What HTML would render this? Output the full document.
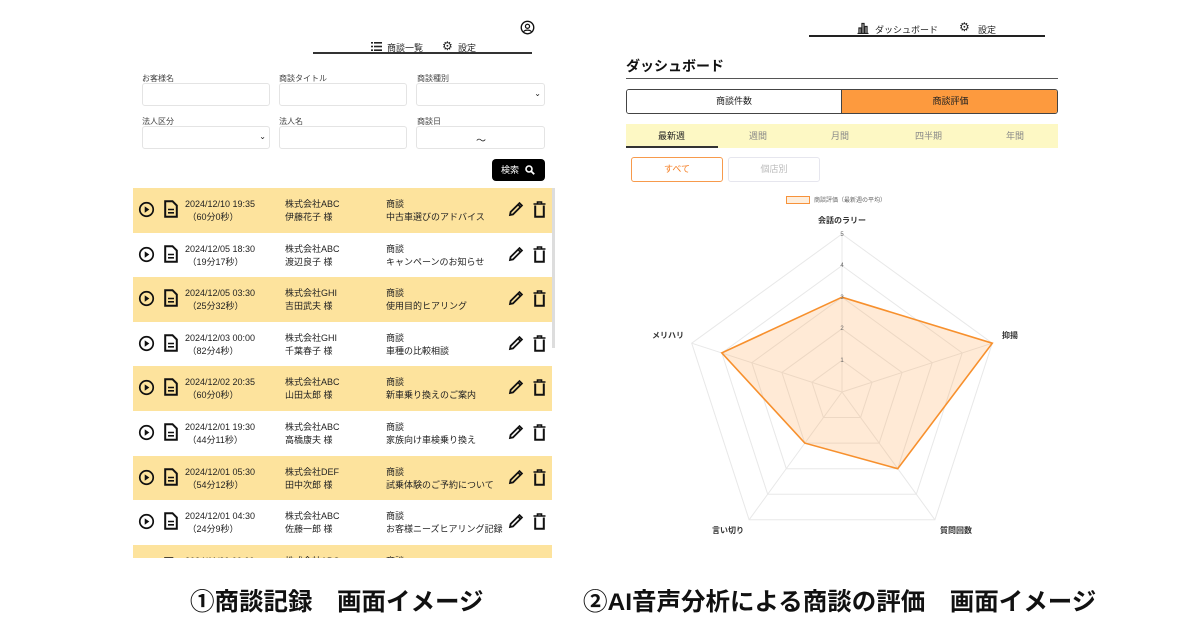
<!DOCTYPE html>
<html><head><meta charset="utf-8"><style>
*{margin:0;padding:0;box-sizing:border-box}
body{width:1200px;height:630px;background:#fff;position:relative;overflow:hidden;font-family:"Liberation Sans","Noto Sans CJK JP",sans-serif;color:#222}
.a{position:absolute}
.lbl{font-size:8px;color:#444}
.inp{position:absolute;height:23px;border:1px solid #e4e4e4;border-radius:3px;background:#fff}
.row{position:absolute;left:0;width:419px;height:44.6px;font-size:9px;line-height:13px}
.row.y{background:#fde39d}
.row .t{position:absolute;top:10px}
.nav{font-size:9px;color:#222}
.cap{font-size:24.5px;font-weight:bold;color:#111;white-space:nowrap}
</style></head><body>
<!-- Left panel -->
<svg class="a" style="left:520px;top:20px" width="15" height="15" viewBox="0 0 24 24"><circle cx="12" cy="12" r="10" fill="none" stroke="#111" stroke-width="2.2"/><circle cx="12" cy="10" r="3.3" fill="none" stroke="#111" stroke-width="2"/><path d="M6 18.5c2-3 10-3 12 0" fill="none" stroke="#111" stroke-width="2"/></svg>
<svg class="a" style="left:371px;top:42px" width="11" height="9" viewBox="0 0 11 9"><g fill="#222"><rect x="0" y="0" width="2" height="1.6"/><rect x="3" y="0" width="8" height="1.6"/><rect x="0" y="3.7" width="2" height="1.6"/><rect x="3" y="3.7" width="8" height="1.6"/><rect x="0" y="7.4" width="2" height="1.6"/><rect x="3" y="7.4" width="8" height="1.6"/></g></svg>
<div class="a nav" style="left:387px;top:41px">商談一覧</div>
<div class="a nav" style="left:442px;top:39px;font-size:12px">⚙</div>
<div class="a nav" style="left:458px;top:41px">設定</div>
<div class="a" style="left:313px;top:52px;width:219px;height:2px;background:#333"></div>

<div class="a lbl" style="left:142px;top:73px">お客様名</div>
<div class="a lbl" style="left:279px;top:73px">商談タイトル</div>
<div class="a lbl" style="left:417px;top:73px">商談種別</div>
<div class="inp" style="left:142px;top:83px;width:128px"></div>
<div class="inp" style="left:279px;top:83px;width:128px"></div>
<div class="inp" style="left:416px;top:83px;width:129px"><span class="a" style="right:3px;top:5px;font-size:8px">⌄</span></div>
<div class="a lbl" style="left:142px;top:116px">法人区分</div>
<div class="a lbl" style="left:279px;top:116px">法人名</div>
<div class="a lbl" style="left:417px;top:116px">商談日</div>
<div class="inp" style="left:142px;top:126px;width:128px"><span class="a" style="right:3px;top:5px;font-size:8px">⌄</span></div>
<div class="inp" style="left:279px;top:126px;width:128px"></div>
<div class="inp" style="left:416px;top:126px;width:129px"><span class="a" style="left:59px;top:5px;font-size:10px">～</span></div>
<div class="a" style="left:492px;top:159px;width:53px;height:22px;background:#000;border-radius:4px;color:#fff;font-size:9px;line-height:22px;padding-left:9px">検索 <svg style="vertical-align:-2px;margin-left:3px" width="10" height="10" viewBox="0 0 10 10"><circle cx="4" cy="4" r="3" fill="none" stroke="#fff" stroke-width="1.6"/><path d="M6.2 6.2L9.2 9.2" stroke="#fff" stroke-width="1.8"/></svg></div>

<div class="a" style="left:552px;top:188px;width:3px;height:160px;background:#ddd"></div>

<div id="rows" class="a" style="left:133px;top:188px;width:419px;height:370px;overflow:hidden"></div>

<div class="a cap" style="left:190px;top:583px">①商談記録　画面イメージ</div>

<!-- Right panel -->
<svg class="a" style="left:857px;top:22px" width="12" height="12" viewBox="0 0 12 12"><path d="M0.5 11.5H11.5M2 11V6H4V11M5 11V1.5H7V11M8 11V4.5H10V11" fill="none" stroke="#222" stroke-width="1.3"/></svg>
<div class="a nav" style="left:875px;top:23px">ダッシュボード</div>
<div class="a nav" style="left:959px;top:20px;font-size:12px">⚙</div>
<div class="a nav" style="left:978px;top:23px">設定</div>
<div class="a" style="left:809px;top:35px;width:236px;height:2px;background:#222"></div>

<div class="a" style="left:626px;top:56px;font-size:14px;font-weight:bold;color:#111">ダッシュボード</div>
<div class="a" style="left:626px;top:78px;width:432px;height:1px;background:#555"></div>
<div class="a" style="left:626px;top:89px;width:432px;height:25px;border:1px solid #444;border-radius:3px;overflow:hidden">
<div class="a" style="left:0;top:0;width:215px;height:23px;background:#fff;border-right:1px solid #444;font-size:9px;text-align:center;line-height:23px">商談件数</div>
<div class="a" style="left:215px;top:0;width:217px;height:23px;background:#fd9a3e;font-size:9px;text-align:center;line-height:23px">商談評価</div>
</div>
<div class="a" style="left:626px;top:124px;width:432px;height:24px;background:#fdf8c4;font-size:9px;color:#888;line-height:24px">
<span class="a" style="left:32px;color:#222">最新週</span><span class="a" style="left:123px">週間</span><span class="a" style="left:205px">月間</span><span class="a" style="left:289px">四半期</span><span class="a" style="left:380px">年間</span>
<div class="a" style="left:0;top:22px;width:92px;height:2px;background:#333"></div></div>
<div class="a" style="left:631px;top:157px;width:92px;height:25px;border:1px solid #f79a4c;border-radius:3px;color:#f57c1f;font-size:9px;text-align:center;line-height:23px">すべて</div>
<div class="a" style="left:728px;top:157px;width:92px;height:25px;border:1px solid #e6e6ee;border-radius:3px;color:#bbb;font-size:9px;text-align:center;line-height:23px">個店別</div>
<div class="a" style="left:786px;top:196px;width:24px;height:8px;border:1.5px solid #f7923a;background:#fdeedd"></div>
<div class="a" style="left:814px;top:195px;font-size:6px;color:#666">商談評価（最新週の平均）</div>

<svg class="a" style="left:0;top:0" width="1200" height="630">
<g transform="translate(842 392)" fill="none" stroke="#e8e8e8" stroke-width="1">
<polygon points="0,-31.6 30.05,-9.76 18.58,25.56 -18.58,25.56 -30.05,-9.76"/>
<polygon points="0,-63.2 60.1,-19.5 37.2,51.1 -37.2,51.1 -60.1,-19.5"/>
<polygon points="0,-94.8 90.2,-29.3 55.7,76.7 -55.7,76.7 -90.2,-29.3"/>
<polygon points="0,-126.4 120.2,-39.1 74.3,102.3 -74.3,102.3 -120.2,-39.1"/>
<polygon points="0,-158 150.3,-48.8 92.9,127.8 -92.9,127.8 -150.3,-48.8"/>
<path d="M0 0L0 -158M0 0L150.3 -48.8M0 0L92.9 127.8M0 0L-92.9 127.8M0 0L-150.3 -48.8"/>
</g>
<polygon points="842,297.2 992.3,343.2 897.7,468.7 804.8,443.1 721.8,352.9" fill="rgba(253,160,70,0.22)" stroke="#f7902d" stroke-width="1.6"/>
<g font-size="6" fill="#666" text-anchor="middle" font-family="Liberation Sans,sans-serif">
<text x="842" y="236">5</text><text x="842" y="267">4</text><text x="842" y="299">3</text><text x="842" y="330">2</text><text x="842" y="362">1</text></g>
<g font-size="8" fill="#333" font-family="Liberation Sans,Noto Sans CJK JP,sans-serif" text-anchor="middle" font-weight="bold">
<text x="842" y="223">会話のラリー</text><text x="1010" y="338">抑揚</text><text x="668" y="338">メリハリ</text><text x="956" y="533">質問回数</text><text x="728" y="533">言い切り</text></g>
</svg>

<div class="a cap" style="left:583px;top:583px">②AI音声分析による商談の評価　画面イメージ</div>

<script>
var d=[["2024/12/10 19:35","（60分0秒）","株式会社ABC","伊藤花子 様","中古車選びのアドバイス"],
["2024/12/05 18:30","（19分17秒）","株式会社ABC","渡辺良子 様","キャンペーンのお知らせ"],
["2024/12/05 03:30","（25分32秒）","株式会社GHI","吉田武夫 様","使用目的ヒアリング"],
["2024/12/03 00:00","（82分4秒）","株式会社GHI","千葉春子 様","車種の比較相談"],
["2024/12/02 20:35","（60分0秒）","株式会社ABC","山田太郎 様","新車乗り換えのご案内"],
["2024/12/01 19:30","（44分11秒）","株式会社ABC","高橋康夫 様","家族向け車検乗り換え"],
["2024/12/01 05:30","（54分12秒）","株式会社DEF","田中次郎 様","試乗体験のご予約について"],
["2024/12/01 04:30","（24分9秒）","株式会社ABC","佐藤一郎 様","お客様ニーズヒアリング記録"],
["2024/11/30 00:00","（30分0秒）","株式会社ABC","鈴木 様","商談"]];
var icons='<svg class="a" style="left:5px;top:13px" width="17" height="17" viewBox="0 0 24 24"><circle cx="12" cy="12" r="9.5" fill="none" stroke="#111" stroke-width="2.4"/><path d="M9.5 7.5L16 12L9.5 16.5Z" fill="#111"/></svg>'+
'<svg class="a" style="left:31px;top:12px" width="14" height="18" viewBox="0 0 14 18"><path d="M1.2 1.2H8.5L12.8 5.5V16.8H1.2Z" fill="none" stroke="#111" stroke-width="2"/><path d="M4 9.5H10M4 12.8H10" stroke="#111" stroke-width="1.6"/></svg>'+
'<svg class="a" style="left:375px;top:13px" width="16" height="16" viewBox="0 0 16 16"><path d="M2 14L2.6 11L11.5 2.1L13.9 4.5L5 13.4Z" fill="none" stroke="#111" stroke-width="1.8"/><path d="M10 3.6L12.4 6" stroke="#111" stroke-width="1.6"/></svg>'+
'<svg class="a" style="left:400px;top:13px" width="13" height="17" viewBox="0 0 13 17"><path d="M0.5 3H12.5M4.5 3V1H8.5V3" fill="none" stroke="#111" stroke-width="1.6"/><path d="M2.2 4.5V15.8H10.8V4.5" fill="none" stroke="#111" stroke-width="2"/></svg>';
var h='';
for(var i=0;i<d.length;i++){var r=d[i];
h+='<div class="row'+(i%2==0?' y':'')+'" style="top:'+(i*44.6)+'px">'+icons+
'<div class="t" style="left:52px">'+r[0]+'<br>&nbsp;'+r[1]+'</div>'+
'<div class="t" style="left:152px">'+r[2]+'<br>'+r[3]+'</div>'+
'<div class="t" style="left:253px">商談<br>'+r[4]+'</div></div>';}
document.getElementById('rows').innerHTML=h;
</script>
</body></html>
